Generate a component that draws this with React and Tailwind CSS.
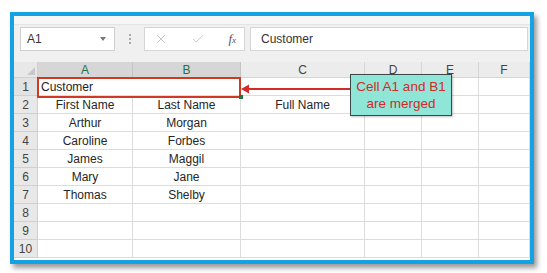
import { X, Check } from "lucide-react"

const cols = ["A", "B", "C", "D", "E", "F"]

const rows = [
  ["First Name", "Last Name", "Full Name"],
  ["Arthur", "Morgan", ""],
  ["Caroline", "Forbes", ""],
  ["James", "Maggil", ""],
  ["Mary", "Jane", ""],
  ["Thomas", "Shelby", ""],
  ["", "", ""],
  ["", "", ""],
  ["", "", ""],
]

function Cell({ children, className = "" }) {
  return (
    <div className={"h-[18px] border-r border-b border-[#dcdcdc] bg-white flex items-center justify-center text-[12px] text-[#262626] leading-none " + className}>
      {children}
    </div>
  )
}

export default function App() {
  return (
    <div className="w-[547px] h-[273px] bg-white pt-[12px] pl-[10px]" style={{ fontFamily: '"Liberation Sans", Arial, sans-serif' }}>
      <div className="relative w-[524px] h-[252px] border-4 border-[#14a2e4] bg-[#f0f0f0] shadow-[3px_4px_5px_rgba(0,0,0,0.4)] flex flex-col">
        {/* formula bar */}
        <div className="h-[46px] flex flex-col">
          <div className="h-[9px] bg-[#f6f6f6] border-b border-[#e4e4e4]"></div>
          <div className="flex items-start pt-[2px] pl-[6px]">
            <div className="w-[95px] h-[24px] bg-white border border-[#cfcfcf] flex items-center justify-between pl-[6px] pr-[8px] text-[12px] text-[#333]">
              <span>A1</span>
              <span className="w-0 h-0 border-l-[3px] border-r-[3px] border-t-[4px] border-l-transparent border-r-transparent border-t-[#777]"></span>
            </div>
            <div className="w-[29px] h-[24px] flex flex-col items-center justify-center gap-[2px]">
              <span className="w-[2px] h-[2px] bg-[#aaa]"></span>
              <span className="w-[2px] h-[2px] bg-[#aaa]"></span>
              <span className="w-[2px] h-[2px] bg-[#aaa]"></span>
            </div>
            <div className="w-[101px] h-[24px] bg-white border border-[#d6d6d6] flex items-center pl-[9px] pr-[8px] justify-between">
              <X size={14} strokeWidth={1.3} color="#b4b4b4" />
              <Check size={14} strokeWidth={1.3} color="#b4b4b4" />
              <span className="italic text-[13px] text-[#555]" style={{ fontFamily: '"Liberation Serif", serif' }}>f<span className="text-[9px]">x</span></span>
            </div>
            <div className="ml-[5px] w-[278px] h-[24px] bg-white border border-[#d6d6d6] flex items-center pl-[10px] text-[12px] text-[#333]">
              Customer
            </div>
          </div>
        </div>

        {/* sheet grid */}
        <div className="grid grid-cols-[24px_95px_108px_124px_57px_57px_51px]">
          <div className="relative h-[16px] bg-[#e8e8e8] border-r border-b border-[#d0d0d0]">
            <span className="absolute right-[2px] bottom-[2px] w-0 h-0" style={{ borderBottom: "8px solid #c8c8c8", borderLeft: "8px solid transparent" }}></span>
          </div>
          {cols.map((c, i) => (
            <div
              key={c}
              className={
                "h-[16px] border-r border-b flex items-center justify-center text-[12px] leading-none " +
                (i < 2 ? "bg-[#d6d6d6] text-[#217346] border-[#c4c4c4]" : "bg-[#ececec] text-[#444] border-[#d6d6d6]")
              }
            >
              {c}
            </div>
          ))}

          {/* row 1 merged */}
          <div className="h-[18px] bg-[#e2e2e2] border-r border-b border-[#d0d0d0] flex items-center justify-center text-[12px] text-[#444]">1</div>
          <div className="col-span-2 relative h-[18px] bg-white border-b border-r border-[#dcdcdc] flex items-center pl-[3px] text-[12px] text-[#222]">
            Customer
            <div className="absolute -left-px -top-px w-[204px] h-[21px] border-2 border-[#d03a24]"></div>
            <div className="absolute right-[-3px] bottom-[-4px] w-[4px] h-[4px] bg-[#217346]"></div>
          </div>
          <Cell></Cell>
          <Cell></Cell>
          <Cell></Cell>
          <Cell></Cell>

          {rows.map((r, i) => (
            <div key={i} className="contents">
              <div className="h-[18px] bg-[#e8e8e8] border-r border-b border-[#d0d0d0] flex items-center justify-center text-[12px] text-[#444]">{i + 2}</div>
              <Cell>{r[0]}</Cell>
              <Cell>{r[1]}</Cell>
              <Cell>{r[2]}</Cell>
              <Cell></Cell>
              <Cell></Cell>
              <Cell></Cell>
            </div>
          ))}
        </div>
        <div className="flex-1 bg-white"></div>

        {/* arrow */}
        <svg className="absolute left-[227px] top-[67px]" width="112" height="12" viewBox="0 0 112 12">
          <line x1="6" y1="6" x2="110" y2="6" stroke="#d42a2a" strokeWidth="2.2" />
          <path d="M0 6 L8 1.5 L8 10.5 Z" fill="#d42a2a" />
        </svg>

        {/* callout */}
        <div className="absolute left-[336px] top-[58px] w-[102px] h-[42px] bg-[#90e6d6] border border-[#3b4a48] flex flex-col items-center justify-center text-[13.5px] leading-[17px] text-[#d22a2a] shadow-[1px_1px_2px_rgba(0,0,0,0.25)]">
          <span>Cell A1 and B1</span>
          <span>are merged</span>
        </div>
      </div>
    </div>
  )
}
